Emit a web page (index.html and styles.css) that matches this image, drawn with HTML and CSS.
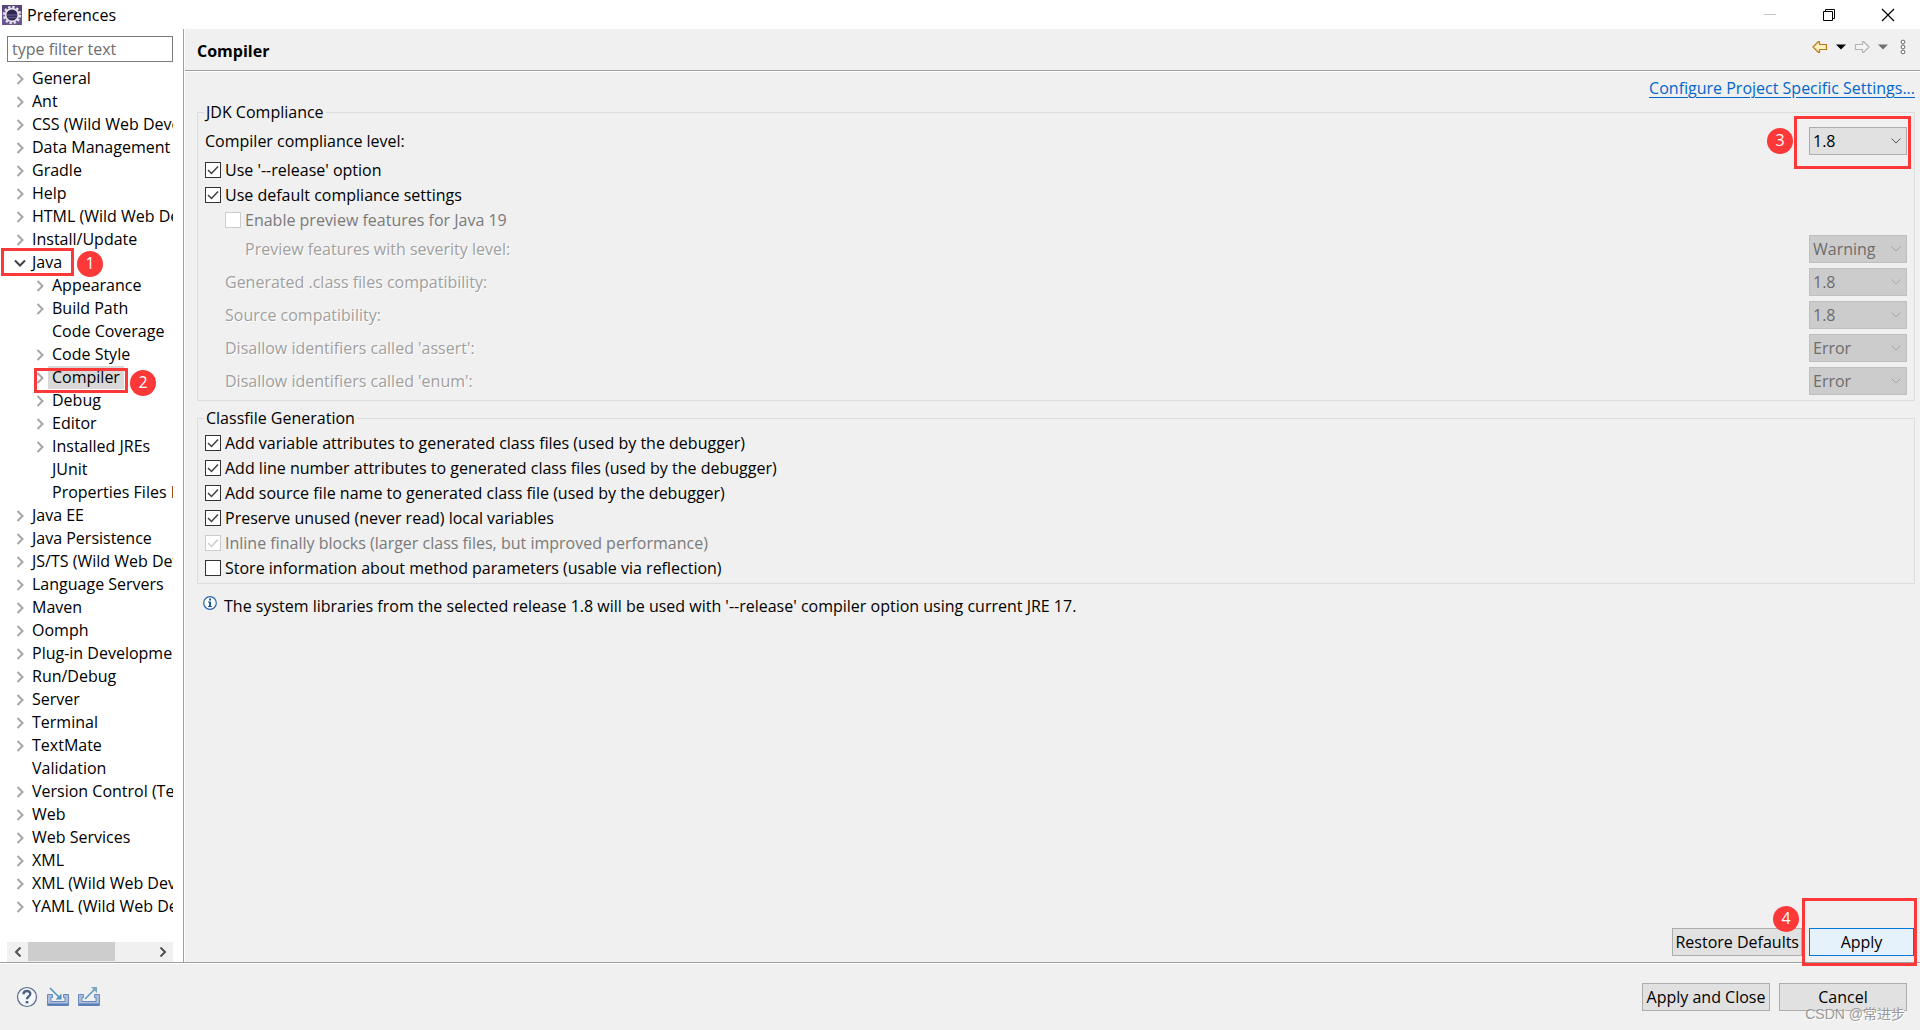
FILE: index.html
```html
<!doctype html>
<html lang="en">
<head>
  <meta charset="utf-8">
  <meta name="viewport" content="width=device-width, initial-scale=1.0">
  <title>Preferences</title>
  <link rel="stylesheet" href="styles.css">
</head>
<body>

<header class="title-bar">
  <svg class="app-icon" width="20" height="20" viewBox="0 0 20 20">
    <rect width="20" height="20" fill="#6a5590"/>
    <path d="M0 0h20v6H0z" fill="#574377"/>
    <circle cx="10" cy="10" r="8" fill="none" stroke="#e6e3ec" stroke-width="2.400" stroke-dasharray="2.400 1.790"/>
    <circle cx="10" cy="10" r="6.400" fill="#2f2750" stroke="#e6e3ec" stroke-width="1.800"/>
    <path d="M5 10h10M5.500 12.500h9" stroke="#5d5285" stroke-width="1.400"/>
  </svg>
  <span class="title">Preferences</span>
  <div class="window-buttons">
    <button type="button" aria-label="Minimize" disabled>
      <svg width="14" height="14" viewBox="0 0 14 14"><path d="M1 6.500h12" stroke="#c4c4c4"/></svg>
    </button>
    <button type="button" aria-label="Restore">
      <svg width="14" height="14" viewBox="0 0 14 14" fill="none" stroke="#000"><path d="M1.500 3.500h9v9h-9zM3.500 3.500v-2h9v9h-2"/></svg>
    </button>
    <button type="button" aria-label="Close">
      <svg width="14" height="14" viewBox="0 0 14 14"><path d="M1 1l12 12M13 1L1 13" stroke="#000" stroke-width="1.200"/></svg>
    </button>
  </div>
</header>

<div class="main">
  <aside class="sidebar">
    <input class="filter" type="text" placeholder="type filter text" aria-label="Filter preferences">

    <ul class="tree" id="tree"></ul>

    <div class="scrollbar">
      <button type="button" aria-label="Scroll left">
        <svg width="8" height="10" viewBox="0 0 8 10"><path d="M6.500 0.500L2 5l4.500 4.500" fill="none" stroke="#505050" stroke-width="2"/></svg>
      </button>
      <div class="track"><div class="thumb"></div></div>
      <button type="button" aria-label="Scroll right">
        <svg width="8" height="10" viewBox="0 0 8 10"><path d="M1.500 0.500L6 5L1.500 9.500" fill="none" stroke="#505050" stroke-width="2"/></svg>
      </button>
    </div>
  </aside>

  <main class="page">
    <div class="page-header">
      <h1>Compiler</h1>
      <div class="toolbar">
        <button type="button" aria-label="Back">
          <svg width="16" height="14" viewBox="0 0 16 14"><path d="M1 7l5.500-5.500h1V4.500h7v5h-7v3h-1z" fill="#fdf0bd" stroke="#b9781a" stroke-width="1.200" stroke-linejoin="round"/></svg>
        </button>
        <button type="button" aria-label="Back history">
          <svg width="10" height="6" viewBox="0 0 10 6"><path d="M0 0.500h10L5 5.500z" fill="#000"/></svg>
        </button>
        <button type="button" aria-label="Forward" disabled>
          <svg width="16" height="14" viewBox="0 0 16 14"><path d="M15 7L9.500 1.500h-1V4.500h-7v5h7v3h1z" fill="#f4f4f4" stroke="#b4b4b4" stroke-width="1.200" stroke-linejoin="round"/></svg>
        </button>
        <button type="button" aria-label="Forward history" disabled>
          <svg width="10" height="6" viewBox="0 0 10 6"><path d="M0 0.500h10L5 5.500z" fill="#6f6f6f"/></svg>
        </button>
        <button type="button" aria-label="Menu">
          <svg width="14" height="16" viewBox="0 0 14 16" fill="#fff" stroke="#6a6a6a"><circle cx="7" cy="3" r="1.900"/><circle cx="7" cy="8" r="1.900"/><circle cx="7" cy="13" r="1.900"/></svg>
        </button>
      </div>
    </div>

    <div class="page-body">
      <a class="project-link" href="#">Configure Project Specific Settings...</a>

      <fieldset class="group">
        <legend>JDK Compliance</legend>

        <div class="row combo-row">
          <label for="level">Compiler compliance level:</label>
          <div class="marked-combo">
            <select id="level"><option>1.8</option></select>
            <span class="mark mark-level"></span>
            <span class="badge badge-level">3</span>
          </div>
        </div>
        <label class="row check"><input type="checkbox" checked>Use '--release' option</label>
        <label class="row check"><input type="checkbox" checked>Use default compliance settings</label>
        <label class="row check indent disabled"><input type="checkbox" disabled>Enable preview features for Java 19</label>
        <div class="row combo-row indent-2 disabled">
          <label for="severity">Preview features with severity level:</label>
          <select id="severity" disabled><option>Warning</option></select>
        </div>
        <div class="row combo-row indent disabled">
          <label for="class-compat">Generated .class files compatibility:</label>
          <select id="class-compat" disabled><option>1.8</option></select>
        </div>
        <div class="row combo-row indent disabled">
          <label for="source-compat">Source compatibility:</label>
          <select id="source-compat" disabled><option>1.8</option></select>
        </div>
        <div class="row combo-row indent disabled">
          <label for="assert-id">Disallow identifiers called 'assert':</label>
          <select id="assert-id" disabled><option>Error</option></select>
        </div>
        <div class="row combo-row indent disabled">
          <label for="enum-id">Disallow identifiers called 'enum':</label>
          <select id="enum-id" disabled><option>Error</option></select>
        </div>
      </fieldset>

      <fieldset class="group">
        <legend>Classfile Generation</legend>
        <label class="row check"><input type="checkbox" checked>Add variable attributes to generated class files (used by the debugger)</label>
        <label class="row check"><input type="checkbox" checked>Add line number attributes to generated class files (used by the debugger)</label>
        <label class="row check"><input type="checkbox" checked>Add source file name to generated class file (used by the debugger)</label>
        <label class="row check"><input type="checkbox" checked>Preserve unused (never read) local variables</label>
        <label class="row check disabled"><input type="checkbox" checked disabled>Inline finally blocks (larger class files, but improved performance)</label>
        <label class="row check"><input type="checkbox">Store information about method parameters (usable via reflection)</label>
      </fieldset>

      <p class="info">
        <svg width="14" height="14" viewBox="0 0 14 14"><circle cx="7" cy="7" r="6.300" fill="#fff" stroke="#2a66a5" stroke-width="1.200"/><path d="M6 2.500h2v2H6zM5 5.500h3v4.500h1v1H5v-1h1V6.500H5z" fill="#1d5c9e"/></svg>
        The system libraries from the selected release 1.8 will be used with '--release' compiler option using current JRE 17.
      </p>

      <div class="page-actions">
        <button class="button" type="button">Restore Defaults</button>
        <div class="marked-apply">
          <button class="button button-default" type="button">Apply</button>
          <span class="mark mark-apply"></span>
          <span class="badge badge-apply">4</span>
        </div>
      </div>
    </div>
  </main>
</div>

<footer class="footer">
  <div class="footer-icons">
    <button type="button" aria-label="Help">
      <svg width="22" height="22" viewBox="0 0 22 22"><circle cx="11" cy="11" r="9.500" fill="#f6f7f9" stroke="#566a8a" stroke-width="1.200"/><path d="M7.500 8.300C7.500 4 14.500 4 14.300 8c-.2 2.400-3.300 2.400-3.300 5.300" fill="none" stroke="#4b6187" stroke-width="2.400"/><rect x="9.700" y="15" width="2.600" height="2.400" fill="#4b6187"/></svg>
    </button>
    <button type="button" aria-label="Import">
      <svg width="22" height="20" viewBox="0 0 22 20"><path d="M0.500 7.500h5v3h-1.500v4h14v-4h-1.500v-3h5v11h-21z" fill="#a9bddd" stroke="#6b8abb"/><path d="M1 17.500h20" stroke="#5a7cb5" stroke-width="2"/><path d="M3 1l9.500 9.500" stroke="#4f93bd" stroke-width="1.500"/><path d="M14.500 6.500v6h-6z" fill="#4f93bd"/></svg>
    </button>
    <button type="button" aria-label="Export">
      <svg width="22" height="20" viewBox="0 0 22 20"><path d="M0.500 7.500h5v3h-1.500v4h14v-4h-1.500v-3h5v11h-21z" fill="#a9bddd" stroke="#6b8abb"/><path d="M1 17.500h20" stroke="#5a7cb5" stroke-width="2"/><path d="M7 12L17 2" stroke="#4f93bd" stroke-width="1.500"/><path d="M13 0h6v6z" fill="#7aa7bd"/></svg>
    </button>
  </div>
  <div class="footer-buttons">
    <button class="button" type="button">Apply and Close</button>
    <button class="button" type="button">Cancel</button>
  </div>
  <span class="watermark">CSDN @常进步</span>
</footer>

<script src="tree.js"></script>
</body>
</html>
```

FILE: styles.css
```css
* {
  box-sizing: border-box;
}

body {
  font-family: "Open Sans", "Noto Sans", "Noto Sans CJK SC", sans-serif;
  font-size: 16px;
  line-height: 20px;
  color: #000;
  background: #f0f0f0;
  margin: 0;
  min-height: 100vh;
  display: flex;
  flex-direction: column;
}

button, input, select {
  font: inherit;
  color: inherit;
}

button {
  border: none;
  background: none;
  padding: 0;
}

svg {
  display: block;
  flex: none;
}

/* Title bar */
.title-bar {
  height: 29px;
  padding: 0 3px 0 2px;
  background: #fff;
  display: flex;
  align-items: center;
  gap: 5px;
}

.window-buttons {
  margin-left: auto;
  display: flex;
}

.window-buttons button {
  width: 59px;
  height: 28px;
  display: flex;
  align-items: center;
  justify-content: center;
}

/* Sidebar */
.main {
  flex: 1;
  display: flex;
  border-bottom: 1px solid #a0a0a0;
}

.sidebar {
  width: 184px;
  flex: none;
  padding: 7px 10px 0 7px;
  background: #fff;
  border-right: 1px solid #a0a0a0;
  display: flex;
  flex-direction: column;
}

.filter {
  width: 100%;
  height: 26px;
  padding: 0 4px;
  border: 1px solid #7a7a7a;
  background: #fff;
}

.filter::placeholder {
  color: #6d6d6d;
  opacity: 1;
}

.tree {
  list-style: none;
  margin: 5px 0 0;
  padding: 0;
}

.node {
  position: relative;
  height: 23px;
}

.node-row {
  height: 23px;
  display: flex;
  align-items: center;
  overflow: hidden;
  white-space: nowrap;
}

.child .node-row {
  padding-left: 20px;
}

.arrow {
  width: 21px;
  padding-left: 9px;
  flex: none;
}

.open .arrow {
  padding-left: 7px;
}

.node-label {
  line-height: 23px;
  padding: 0 4px;
}

.selected .node-label {
  background: #d9d9d9;
}

.scrollbar {
  height: 20px;
  margin-top: auto;
  background: #f0f0f0;
  display: flex;
}

.scrollbar button {
  width: 21px;
  display: flex;
  align-items: center;
  justify-content: center;
}

.track {
  flex: 1;
}

.thumb {
  width: 70%;
  height: 19px;
  background: #cdcdcd;
}

/* Page */
.page {
  flex: 1;
  border-left: 1px solid #fff;
  display: flex;
  flex-direction: column;
}

.page-header {
  height: 42px;
  padding: 0 10px 0 12px;
  border-bottom: 1px solid #a0a0a0;
  display: flex;
  align-items: center;
  justify-content: space-between;
}

h1 {
  font-size: 16px;
  margin: 0;
  padding-top: 2px;
}

.toolbar {
  display: flex;
  gap: 8px;
  align-items: center;
  padding-bottom: 6px;
}

.page-body {
  flex: 1;
  padding: 6px 5px 6px 12px;
  border-top: 1px solid #fff;
  display: flex;
  flex-direction: column;
}

.project-link {
  align-self: flex-end;
  color: #0066cc;
  text-underline-offset: 3px;
}

.group {
  min-width: 0;
  margin: 4px 0 3px;
  padding: 5px 7px;
  border: 1px solid #dcdcdc;
  display: grid;
  gap: 5px;
}

.group legend {
  padding: 0 2px;
  margin-left: -1px;
}

.row {
  display: flex;
  align-items: center;
  min-height: 20px;
}

.combo-row {
  justify-content: space-between;
}

.check {
  gap: 4px;
  justify-self: start;
}

.indent {
  padding-left: 20px;
}

.indent-2 {
  padding-left: 40px;
}

.disabled {
  color: #7a7a7a;
}

.combo-row.disabled label {
  color: #a0a0a0;
  text-shadow: 1px 1px 0 #fff;
}

input[type="checkbox"] {
  appearance: none;
  width: 16px;
  height: 16px;
  margin: 0;
  border: 1px solid #333;
  background: #fff;
}

input[type="checkbox"]:checked {
  background: #fff url("check.svg") no-repeat center;
}

input[type="checkbox"]:disabled {
  border-color: #ccc;
}

input[type="checkbox"]:checked:disabled {
  background-image: url("check-disabled.svg");
}

select {
  appearance: none;
  width: 98px;
  height: 28px;
  padding: 0 3px;
  border: 1px solid #adadad;
  border-radius: 0;
  background: #e1e1e1 url("arrow.svg") no-repeat right 5px center;
}

select:disabled {
  color: #6d6d6d;
  opacity: 1;
  border-color: #bfbfbf;
  background-color: #ccc;
  background-image: url("arrow-disabled.svg");
}

.info {
  margin: 9px 0 0 6px;
  display: flex;
  gap: 7px;
}

.page-actions {
  margin-top: auto;
  padding-right: 1px;
  display: flex;
  justify-content: flex-end;
  gap: 7px;
}

.button {
  min-width: 128px;
  height: 28px;
  padding: 0 2px;
  border: 1px solid #adadad;
  background: #e1e1e1;
}

.button-default {
  min-width: 105px;
  border-color: #0078d7;
  background: #e5f1fb;
}

/* Footer */
.footer {
  position: relative;
  height: 67px;
  padding: 0 13px 0 16px;
  border-top: 1px solid #fff;
  display: flex;
  align-items: center;
  justify-content: space-between;
}

.footer-icons, .footer-buttons {
  display: flex;
  align-items: center;
  gap: 9px;
}

.watermark {
  position: absolute;
  right: 15px;
  bottom: 6px;
  font-family: "Liberation Sans", "Noto Sans CJK SC", sans-serif;
  font-size: 14px;
  color: #999;
  text-shadow: 1px 1px 0 #fff;
}

/* Numbered step markers */
.mark {
  position: absolute;
  z-index: 1;
  border: 3px solid #fc3838;
  pointer-events: none;
}

.badge {
  position: absolute;
  z-index: 1;
  width: 26px;
  height: 26px;
  border-radius: 50%;
  background: #fc3838;
  color: #fff;
  line-height: 24px;
  text-align: center;
}

.marked-combo, .marked-apply {
  position: relative;
  display: flex;
}

.mark-java {
  inset: -3px auto -2px -6px;
  width: 73px;
}

.badge-java {
  left: 70px;
  top: 0;
}

.mark-compiler {
  inset: 2px auto -4px 27px;
  width: 94px;
}

.badge-compiler {
  left: 123px;
  top: 4px;
}

.mark-level {
  inset: -11px -4px -14px -15px;
}

.badge-level {
  left: -42px;
  top: 1px;
}

.mark-apply {
  inset: -30px -3px -10px -7px;
}

.badge-apply {
  left: -36px;
  top: -22px;
}
```

FILE: tree.js
```js
const nodes = [
  ['General'],
  ['Ant'],
  ['CSS (Wild Web Developer)'],
  ['Data Management'],
  ['Gradle'],
  ['Help'],
  ['HTML (Wild Web Developer)'],
  ['Install/Update'],
  ['Java', { open: true, step: 1, mark: 'java' }],
  ['Appearance', { child: true }],
  ['Build Path', { child: true }],
  ['Code Coverage', { child: true, leaf: true }],
  ['Code Style', { child: true }],
  ['Compiler', { child: true, selected: true, step: 2, mark: 'compiler' }],
  ['Debug', { child: true }],
  ['Editor', { child: true }],
  ['Installed JREs', { child: true }],
  ['JUnit', { child: true, leaf: true }],
  ['Properties Files Editor', { child: true, leaf: true }],
  ['Java EE'],
  ['Java Persistence'],
  ['JS/TS (Wild Web Developer)'],
  ['Language Servers'],
  ['Maven'],
  ['Oomph'],
  ['Plug-in Development'],
  ['Run/Debug'],
  ['Server'],
  ['Terminal'],
  ['TextMate'],
  ['Validation', { leaf: true }],
  ['Version Control (Team)'],
  ['Web'],
  ['Web Services'],
  ['XML'],
  ['XML (Wild Web Developer)'],
  ['YAML (Wild Web Developer)']
];

const closedArrow = '<svg width="9" height="12" viewBox="0 0 9 12"><path d="M1.500 1L6.500 6l-5 5" fill="none" stroke="#a6a6a6" stroke-width="2"/></svg>';
const openArrow = '<svg width="12" height="12" viewBox="0 0 12 12"><path d="M1 3.500l5 5 5-5" fill="none" stroke="#404040" stroke-width="2"/></svg>';

document.getElementById('tree').innerHTML = nodes.map(([name, opts = {}]) => {
  const arrow = opts.leaf ? '' : (opts.open ? openArrow : closedArrow);
  const classes = ['node', opts.open && 'open', opts.child && 'child', opts.selected && 'selected'].filter(Boolean).join(' ');
  const marker = opts.step
    ? `<span class="mark mark-${opts.mark}"></span><span class="badge badge-${opts.mark}">${opts.step}</span>`
    : '';
  return `<li class="${classes}">
    <div class="node-row"><span class="arrow">${arrow}</span><span class="node-label">${name}</span></div>
    ${marker}
  </li>`;
}).join('');
```

FILE: arrow.svg
```svg
<svg xmlns="http://www.w3.org/2000/svg" width="10" height="6" viewBox="0 0 10 6"><path d="M0.500 0.500L5 5l4.500-4.500" fill="none" stroke="#505050"/></svg>
```

FILE: arrow-disabled.svg
```svg
<svg xmlns="http://www.w3.org/2000/svg" width="10" height="6" viewBox="0 0 10 6"><path d="M0.500 0.500L5 5l4.500-4.500" fill="none" stroke="#a6a6a6"/></svg>
```

FILE: check.svg
```svg
<svg xmlns="http://www.w3.org/2000/svg" width="12" height="10" viewBox="0 0 12 10"><path d="M1 5l3.500 3.500L11 1.500" fill="none" stroke="#404040" stroke-width="1.500"/></svg>
```

FILE: check-disabled.svg
```svg
<svg xmlns="http://www.w3.org/2000/svg" width="12" height="10" viewBox="0 0 12 10"><path d="M1 5l3.500 3.500L11 1.500" fill="none" stroke="#ccc" stroke-width="1.500"/></svg>
```
